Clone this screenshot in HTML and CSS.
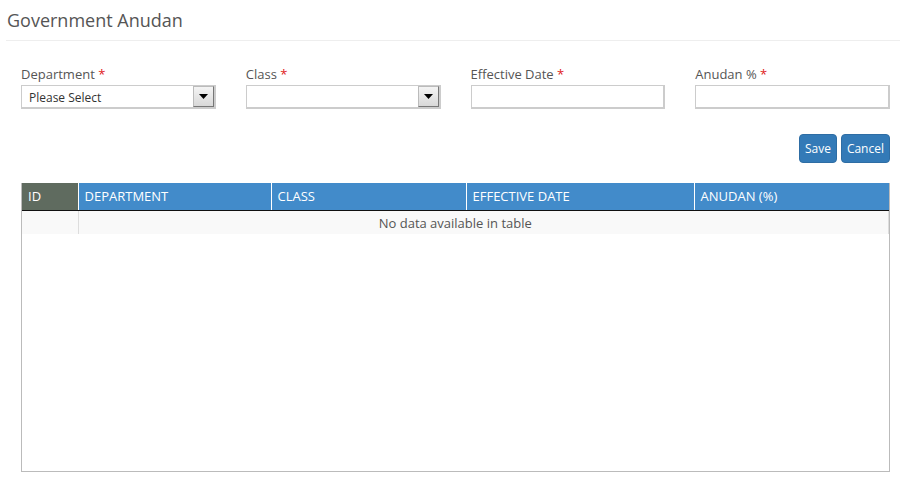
FILE: index.html
```html
<!DOCTYPE html>
<html>
<head>
<meta charset="utf-8">
<link rel="stylesheet" href="styles.css">
</head>
<body>
<div class="page">
  <div class="page-header">
    <h1 class="title">Government Anudan</h1>
  </div>
  <div class="content">
    <div class="fields">
      <div class="field">
        <label class="label">Department <span class="req">*</span></label>
        <div class="select">
          <span class="select-text">Please Select</span>
          <span class="select-btn"><svg width="9" height="5" viewBox="0 0 9 5"><path d="M0 0H9L4.5 5Z" fill="#000"/></svg></span>
        </div>
      </div>
      <div class="field">
        <label class="label">Class <span class="req">*</span></label>
        <div class="select">
          <span class="select-text"></span>
          <span class="select-btn"><svg width="9" height="5" viewBox="0 0 9 5"><path d="M0 0H9L4.5 5Z" fill="#000"/></svg></span>
        </div>
      </div>
      <div class="field">
        <label class="label">Effective Date <span class="req">*</span></label>
        <div class="input"></div>
      </div>
      <div class="field">
        <label class="label">Anudan % <span class="req">*</span></label>
        <div class="input"></div>
      </div>
    </div>
    <div class="actions">
      <button class="btn">Save</button>
      <button class="btn">Cancel</button>
    </div>
    <div class="table-wrap">
      <table class="grid">
        <thead>
          <tr>
            <th class="col-id">ID</th>
            <th class="col-dept">DEPARTMENT</th>
            <th class="col-class">CLASS</th>
            <th class="col-date">EFFECTIVE DATE</th>
            <th class="col-anudan">ANUDAN (%)</th>
          </tr>
        </thead>
        <tbody>
          <tr class="odd">
            <td class="id-cell"></td>
            <td class="empty" colspan="4"><span class="empty-text">No data available in table</span></td>
          </tr>
        </tbody>
      </table>
    </div>
  </div>
</div>
</body>
</html>
```

FILE: styles.css
```css
* { box-sizing: border-box; }
html, body {
  margin: 0;
  padding: 0;
  background: #fff;
  font-family: "Open Sans", "Liberation Sans", sans-serif;
  color: #555;
}
.page {
  width: 901px;
}
.page-header {
  margin: 0 1px 0 6px;
  padding: 9px 0 9px 1px;
  border-bottom: 1px solid #eee;
}
.title {
  margin: 0;
  font-size: 18px;
  font-weight: 400;
  line-height: 22px;
  color: #555;
}
.content {
  padding: 24px 11px 0 21px;
}
.fields {
  display: grid;
  grid-template-columns: repeat(4, 1fr);
  column-gap: 30px;
}
.field {
  display: flex;
  flex-direction: column;
}
.label {
  font-size: 13px;
  line-height: 18px;
  color: #555;
  margin-bottom: 2px;
}
.req { color: #e02020; }
.select {
  height: 24px;
  border: 1px solid #ccc;
  border-width: 1px 2px 2px 1px;
  display: flex;
  align-items: center;
  justify-content: space-between;
  background: #fff;
}
.select-text {
  font-size: 12px;
  color: #333;
  padding-left: 7px;
  padding-top: 1px;
}
.select-btn {
  width: 21px;
  height: 21px;
  background: linear-gradient(#f4f4f4, #d8d8d8);
  border: 1px solid #999;
  border-color: #bbb #777 #777 #bbb;
  display: flex;
  align-items: center;
  justify-content: center;
}
.input {
  height: 24px;
  border: 1px solid #ccc;
  border-width: 1px 2px 2px 1px;
  background: #fff;
}
.actions {
  display: flex;
  justify-content: flex-end;
  gap: 4px;
  margin-top: 25px;
}
.btn {
  font-family: "Open Sans", "Liberation Sans", sans-serif;
  font-size: 12px;
  line-height: 17px;
  color: #fff;
  background: #337ab7;
  border: 1px solid #2e6da4;
  border-radius: 4px;
  padding: 5px 5px;
  height: 29px;
}
.table-wrap {
  margin-top: 20px;
  height: 289px;
  border: 1px solid #bbb;
  border-top: none;
}
.grid {
  width: 100%;
  border-collapse: collapse;
  table-layout: fixed;
  font-size: 13px;
}
.grid th {
  background: #428bca;
  color: #fff;
  font-weight: 400;
  text-align: left;
  padding: 4px 6px 5px 6px;
  line-height: 16px;
  border-left: 1px solid #fff;
  border-bottom: 1px solid #111;
  height: 27px;
}
.grid th.col-id {
  background: #5f6b5f;
  border-left: none;
}
.col-id { width: 56px; }
.col-dept { width: 193px; }
.col-class { width: 195px; }
.col-date { width: 228px; }
.grid td {
  background: #f9f9f9;
  padding: 4px 6px 3px;
  line-height: 16px;
  height: 23px;
}
.grid td.id-cell {
  border-right: 1px solid #ddd;
}
.grid td.empty {
  text-align: center;
  border-right: 1px solid #ddd;
}
.empty-text {
  position: relative;
  left: -28px;
}
```
